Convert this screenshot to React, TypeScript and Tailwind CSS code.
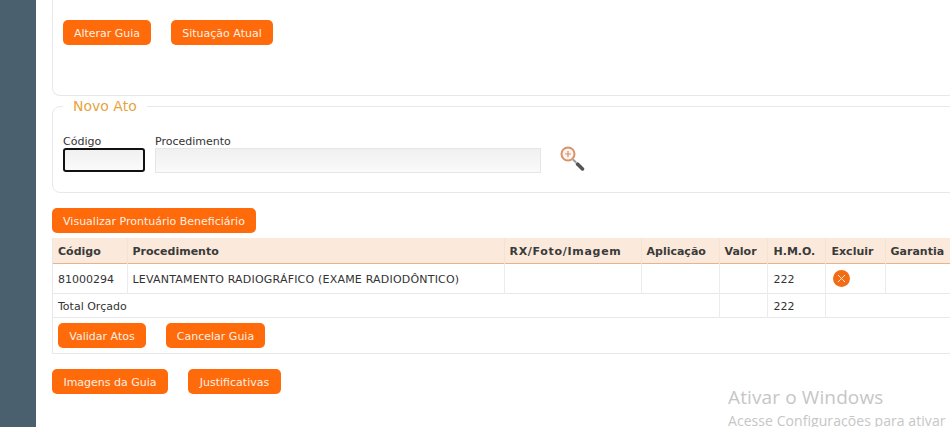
import React from "react";

const Btn: React.FC<{ label: string; className?: string }> = ({ label, className }) => (
  <button
    type="button"
    className={`h-[25px] rounded-[5px] bg-[#ff6a0a] pt-[2px] text-center text-[11px] leading-[23px] text-[#fdf0e4] [font-family:'DejaVu_Sans',sans-serif] ${className ?? ""}`}
  >
    {label}
  </button>
);

const headers = [
  "Código",
  "Procedimento",
  "RX/Foto/Imagem",
  "Aplicação",
  "Valor",
  "H.M.O.",
  "Excluir",
  "Garantia",
];

const widths = ["w-[74px]", "w-[377px]", "w-[137px]", "w-[78px]", "w-[48px]", "w-[58px]", "w-[60px]", "w-[85px]"];

const cell = "border-r border-[#ececec] px-[5px] pt-[4px] align-middle";

export default function App() {
  return (
    <div className="flex h-[427px] w-[950px] overflow-hidden bg-white text-[11px] text-[#333] [font-family:'DejaVu_Sans',sans-serif]">
      <div className="w-9 shrink-0 bg-[#4b606f]" />
      <div className="relative w-[1000px] shrink-0 pl-4">
        <div className="h-[96px] rounded-bl-lg border-b border-l border-[#e8e8e8] pl-[10px] pt-5">
          <div className="flex gap-5">
            <Btn label="Alterar Guia" className="w-[88px]" />
            <Btn label="Situação Atual" className="w-[102px]" />
          </div>
        </div>

        <fieldset className="h-[97px] rounded-lg border border-[#e8e8e8] pl-[10px]">
          <legend className="px-[10px] text-[14px] leading-[20px] text-[#e8a33d]">Novo Ato</legend>
          <div className="mt-[17px] flex items-start">
            <div className="w-[82px]">
              <label className="block h-[15px] pt-[1px] text-[11px] leading-[15px]">Código</label>
              <input className="block h-[24px] w-[82px] rounded-[3px] border-2 border-[#111] bg-gradient-to-b from-[#f0f0f0] to-[#fafafa]" />
            </div>
            <div className="ml-[10px] w-[386px]">
              <label className="block h-[15px] pt-[1px] text-[11px] leading-[15px]">Procedimento</label>
              <input className="block h-[25px] w-[386px] border border-[#e6e6e6] bg-gradient-to-b from-[#f0f0f0] to-[#fafafa]" />
            </div>
            <svg className="ml-[17px] mt-[10px]" width="27" height="28" viewBox="0 0 27 28">
              <circle cx="10" cy="11" r="6.5" fill="#fdf6f0" stroke="#d9926a" strokeWidth="2" />
              <path d="M10 8v6M7 11h6" stroke="#d9926a" strokeWidth="1.2" />
              <path d="M15 16.5l3 3" stroke="#999" strokeWidth="2" />
              <path d="M19.5 21l5 5" stroke="#555" strokeWidth="3.5" strokeLinecap="round" />
            </svg>
          </div>
        </fieldset>

        <Btn label="Visualizar Prontuário Beneficiário" className="mt-[15px] block w-[204px]" />

        <div className="mt-[5px] h-[116px] border-b border-l border-[#e8e8e8]">
          <table className="w-[917px] table-fixed border-collapse">
            <thead>
              <tr className="h-[25px] border-b border-[#e6b48e] bg-[#fbeadb]">
                {headers.map((h, i) => (
                  <th
                    key={h}
                    className={`${widths[i]} border-r border-[#f6e2d0] pt-[3px] pr-[5px] text-left font-bold text-[#3a3a3a] ${
                      h === "H.M.O." || h === "Excluir" ? "pl-[6px]" : "pl-[5px]"
                    } ${h === "RX/Foto/Imagem" ? "tracking-[0.7px]" : ""}`}
                  >
                    {h}
                  </th>
                ))}
              </tr>
            </thead>
            <tbody>
              <tr className="h-[30px] border-b border-[#e8e8e8]">
                <td className={cell}>81000294</td>
                <td className={`${cell} whitespace-nowrap tracking-[0.2px]`}>
                  LEVANTAMENTO RADIOGRÁFICO (EXAME RADIODÔNTICO)
                </td>
                <td className={cell} />
                <td className={cell} />
                <td className={cell} />
                <td className={`${cell} pl-[6px]`}>222</td>
                <td className="border-r border-[#ececec] px-[5px] align-middle">
                  <span className="ml-[2px] flex h-[17px] w-[17px] items-center justify-center rounded-full bg-[#f26c16]">
                    <svg width="9" height="9" viewBox="0 0 9 9">
                      <path d="M1 1l7 7M8 1L1 8" stroke="#fde3cf" strokeWidth="1" />
                    </svg>
                  </span>
                </td>
                <td className={cell} />
              </tr>
              <tr className="h-[24px] border-b border-[#e8e8e8]">
                <td colSpan={4} className={cell}>
                  Total Orçado
                </td>
                <td className={cell} />
                <td className={`${cell} pl-[6px]`}>222</td>
                <td colSpan={2} />
              </tr>
            </tbody>
          </table>
          <div className="flex gap-5 pl-[5px] pt-[5px]">
            <Btn label="Validar Atos" className="w-[88px]" />
            <Btn label="Cancelar Guia" className="w-[99px]" />
          </div>
        </div>

        <div className="mt-[15px] flex gap-5">
          <Btn label="Imagens da Guia" className="w-[116px]" />
          <Btn label="Justificativas" className="w-[93px]" />
        </div>

        {/* marca d'agua do Windows */}
        <div className="absolute left-[692px] top-[384px] whitespace-nowrap text-[#c6c6c6] [font-family:'Open_Sans',sans-serif]">
          <div className="text-[19px] leading-[26px] tracking-[0.12px]">Ativar o Windows</div>
          <div className="mt-[4px] text-[14px] leading-[14px] tracking-[0.06px]">Acesse Configurações para ativar</div>
        </div>
      </div>
    </div>
  );
}
